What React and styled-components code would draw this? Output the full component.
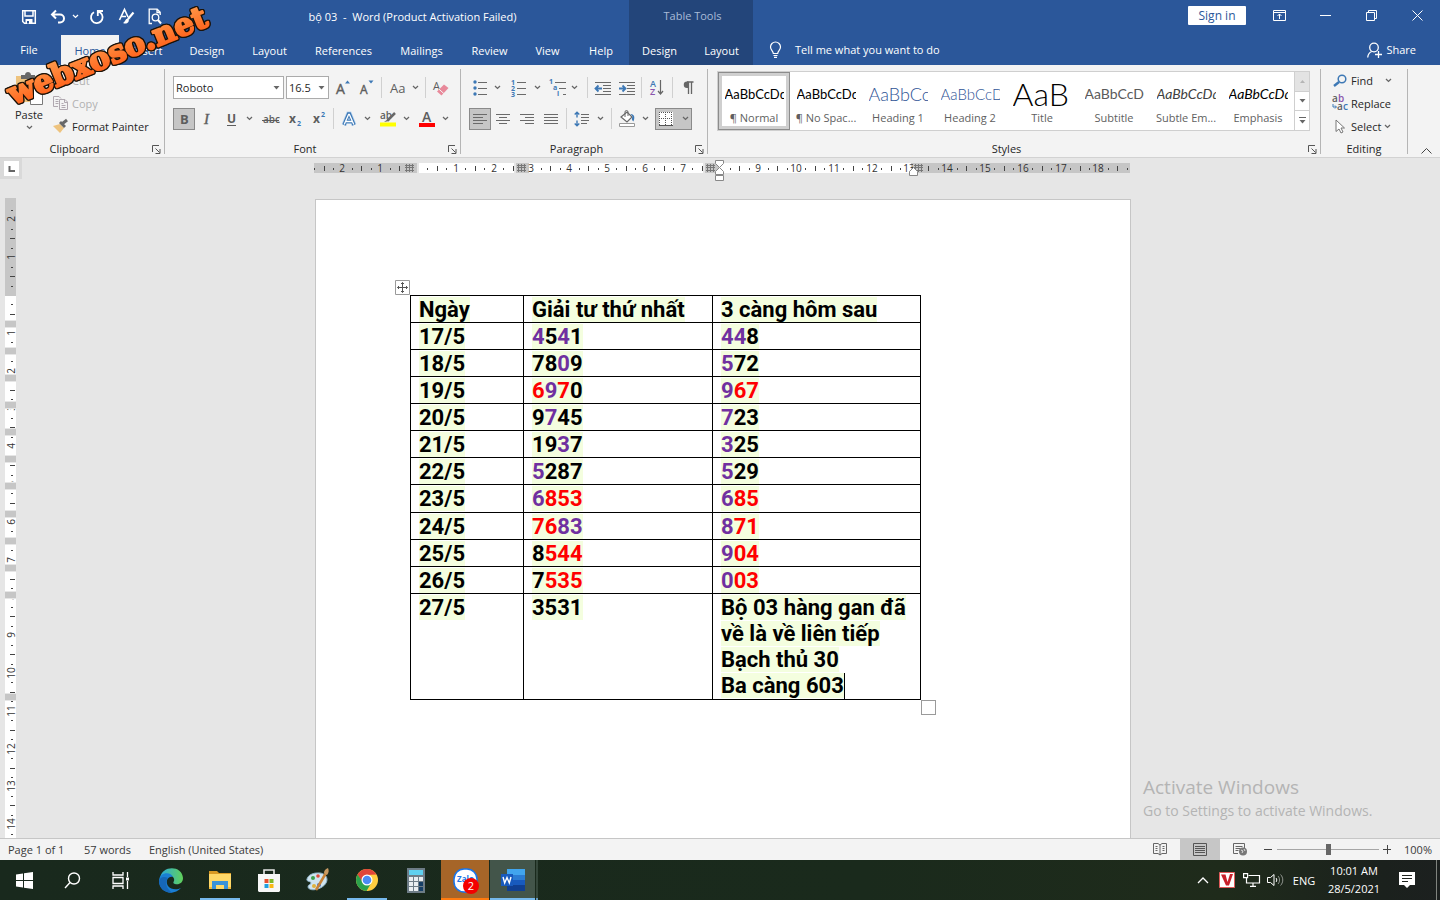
import React from 'react';
import styled, { createGlobalStyle, css } from 'styled-components';

const ui = `'Open Sans', 'Noto Sans', sans-serif`;

const GlobalStyle = createGlobalStyle`
  * { box-sizing: border-box; }
  body { margin: 0; background: #e6e6e6; font-family: ${ui}; font-size: 11px; color: #262626; }
  button, select, input { font: inherit; color: inherit; }
  button { border: 0; padding: 0; margin: 0; background: none; cursor: default; }
  svg { display: block; flex: none; overflow: visible; }
`;

/* ---------- frame ---------- */
const Shell = styled.div`
  position: relative;
  display: flex;
  flex-direction: column;
  height: 100vh;
  overflow: hidden;
`;
const SiteMark = styled.svg`
  position: absolute;
  left: 0;
  top: 0;
  pointer-events: none;
  filter: drop-shadow(1px 0 0 #1c1208) drop-shadow(-1px 0 0 #1c1208) drop-shadow(0 1px 0 #1c1208) drop-shadow(0 -1px 0 #1c1208);
`;
const TitleBar = styled.header`
  display: flex;
  height: 35px;
  background: #2b579a;
  color: #fff;
`;
const QuickAccess = styled.div`
  display: flex;
  align-items: center;
  width: 196px;
  height: 33px;
  padding-left: 20px;
`;
const QuickButton = styled.button`
  display: flex;
  justify-content: center;
  width: ${(p) => p.$w}px;
`;
const DocTitle = styled.h1`
  width: 433px;
  margin: 0;
  font-size: 11px;
  font-weight: 400;
  line-height: 33px;
  text-align: center;
  white-space: pre;
`;
const ContextTitle = styled.div`
  width: 124px;
  padding-left: 3px;
  background: #23457a;
  color: #a9bcd8;
  line-height: 32px;
  text-align: center;
`;
const WindowControls = styled.div`
  display: flex;
  align-items: center;
  height: 31px;
  margin-left: auto;
`;
const SignIn = styled.button`
  width: 58px;
  height: 19px;
  margin-right: 10px;
  background: #fff;
  border-radius: 1px;
  color: #2b579a;
  font-size: 12px;
  line-height: 20px;
`;
const WindowButton = styled.button`
  display: flex;
  justify-content: center;
  width: 46px;
`;
const TabBar = styled.nav`
  display: flex;
  height: 30px;
  background: #2b579a;
  color: #fff;
`;
const Tab = styled.button`
  width: ${(p) => p.$w}px;
  height: 30px;
  line-height: 30px;
  padding-top: ${(p) => (p.$file ? 0 : 1)}px;
  ${(p) => p.$file && css`padding-right: 3px;`}
  ${(p) => p.$active && css`background: #f3f3f3; color: #2b579a;`}
  ${(p) => p.$context && css`background: #23457a;`}
`;
const TellMe = styled.button`
  display: flex;
  align-items: center;
  gap: 13px;
  padding-left: 16px;
  height: 29px;
`;
const Share = styled.button`
  display: flex;
  align-items: center;
  gap: 4px;
  height: 29px;
  margin-left: auto;
  padding-right: 24px;
`;

/* ---------- ribbon ---------- */
const Ribbon = styled.div`
  display: flex;
  height: 93px;
  background: #f3f3f3;
  border-bottom: 1px solid #d2d2d2;
`;
const GroupBox = styled.section`
  display: flex;
  flex-direction: column;
  width: ${(p) => (p.$w ? p.$w + 'px' : 'auto')};
  flex: ${(p) => (p.$w ? 'none' : '1 1 0')};
  min-width: 0;
  margin: 4px 0 3px;
  border-right: 1px solid #b5b5b5;
`;
const GroupBody = styled.div`
  display: flex;
  flex: 1;
  min-height: 0;
  flex-direction: ${(p) => (p.$column ? 'column' : 'row')};
  gap: ${(p) => (p.$column ? 8 : 0)}px;
  padding: ${(p) => p.$pad || '0'};
`;
const GroupFoot = styled.div`
  display: flex;
  align-items: center;
  height: 10px;
`;
const GroupLabel = styled.span`
  flex: 1;
  text-align: center;
  line-height: 14px;
`;
const Launcher = styled.button`
  display: flex;
  justify-content: center;
  width: 15px;
`;
const ToolRow = styled.div`
  display: flex;
  align-items: center;
  height: 23px;
`;
const Tool = styled.button`
  display: flex;
  align-items: center;
  justify-content: center;
  gap: ${(p) => p.$gap || 0}px;
  width: ${(p) => p.$w || 24}px;
  height: 22px;
  color: #5d5d5d;
  ${(p) => p.$on && css`background: #c6c6c6; border: 1px solid #8a8a8a;`}
`;
const Rule = styled.span`
  width: 1px;
  height: 21px;
  margin: 0 3px 0 ${(p) => p.$before || 2}px;
  background: #d0d0d0;
`;
const Gap = styled.span`
  width: ${(p) => p.$w}px;
`;
const Combo = styled.span`
  display: flex;
  align-items: center;
  width: ${(p) => p.$w}px;
  height: 23px;
  margin-right: 2px;
  padding-right: 3px;
  background: #fff;
  border: 1px solid #ababab;
`;
const ComboSelect = styled.select`
  flex: 1;
  min-width: 0;
  appearance: none;
  border: 0;
  padding: 1px 0 0 2px;
  background: none;
  line-height: 20px;
`;
const PasteButton = styled.button`
  display: flex;
  flex-direction: column;
  align-items: center;
  gap: 3px;
  width: 53px;
  padding: 3px 0 0 5px;
  line-height: 14px;
`;
const CommandList = styled.div`
  display: flex;
  flex-direction: column;
  gap: 1px;
`;
const Command = styled.button`
  display: flex;
  align-items: center;
  gap: 3px;
  height: 22px;
  text-align: left;
  color: ${(p) => (p.disabled ? '#b1b1b1' : '#262626')};
`;
const CommandIcon = styled.span`
  display: flex;
  justify-content: center;
  width: 16px;
`;
const Gallery = styled.div`
  display: flex;
  flex: 1;
  min-width: 0;
  height: 60px;
  background: #fff;
  border: 1px solid #cfcfcf;
`;
const GalleryItems = styled.div`
  display: flex;
  flex: 1;
  min-width: 0;
  overflow: hidden;
`;
const StyleCard = styled.button`
  display: flex;
  flex: none;
  flex-direction: column;
  align-items: center;
  width: 72px;
  height: 58px;
  padding-top: 9px;
  color: #5f5f5f;
  line-height: 14px;
  white-space: nowrap;
  ${(p) => p.$on && css`
    outline: 1px solid #8c8c8c;
    outline-offset: -1px;
    box-shadow: inset 0 0 0 4px #cfcfcf;
  `}
`;
const Sample = styled.span`
  display: block;
  width: 59px;
  height: 26px;
  margin-bottom: 4px;
  overflow: hidden;
  color: ${(p) => p.$color};
  font-family: Lato, ${ui};
  font-size: ${(p) => p.$size}px;
  font-style: ${(p) => (p.$italic ? 'italic' : 'normal')};
  font-weight: ${(p) => p.$weight || 400};
  line-height: 26px;
  text-align: left;
`;
const GalleryScroll = styled.div`
  display: flex;
  flex-direction: column;
  width: 15px;
  border-left: 1px solid #cfcfcf;
`;
const ScrollButton = styled.button`
  display: flex;
  flex: 1;
  align-items: center;
  justify-content: center;
  background: ${(p) => (p.disabled ? '#e3e3e3' : '#fff')};
  & + & { border-top: 1px solid #cfcfcf; }
`;
const Collapse = styled.button`
  display: flex;
  align-items: flex-end;
  justify-content: center;
  width: 32px;
  padding: 0 0 3px 5px;
`;

/* ---------- document area ---------- */
const RulerBar = styled.div`
  display: flex;
  height: 24px;
`;
const TabStop = styled.button`
  display: flex;
  align-items: center;
  justify-content: center;
  width: 22px;
  height: 21px;
  background: #d9d9d9;
`;
const RulerSlot = styled.div`
  display: flex;
  flex: 1;
  justify-content: center;
  padding-right: 18px;
`;
const Workspace = styled.main`
  position: relative;
  display: flex;
  flex: 1;
  min-height: 0;
  overflow: hidden;
`;
const SideRuler = styled.div`
  width: 16px;
  padding: 16px 0 0 5px;
`;
const PageSlot = styled.div`
  display: flex;
  flex: 1;
  justify-content: center;
  align-items: flex-start;
  padding: 17px 10px 0 0;
`;
const Page = styled.article`
  width: 816px;
  height: 1056px;
  padding: 95px 94px;
  background: #fff;
  border: 1px solid #c6c6c6;
`;
const TableFrame = styled.div`
  position: relative;
  width: 511px;
`;
const MoveHandle = styled.button`
  position: absolute;
  left: -15px;
  top: -15px;
`;
const SizeHandle = styled.button`
  position: absolute;
  right: -15px;
  bottom: -15px;
  width: 15px;
  height: 15px;
  background: #fff;
  border: 1px solid #9a9a9a;
`;
const DataTable = styled.table`
  width: 511px;
  table-layout: fixed;
  border-collapse: collapse;
  color: #000;
  font-family: Roboto, sans-serif;
  font-size: 22px;
  font-weight: 700;
  line-height: 24px;
`;
const cell = css`
  padding: 2px 0 0 8px;
  border: 1px solid #000;
  text-align: left;
  vertical-align: top;
  font-weight: 700;
`;
const HeadCell = styled.th`
  ${cell}
  width: ${(p) => p.$w}px;
`;
const Cell = styled.td`
  ${cell}
  ${(p) => p.$tall && css`padding-bottom: 1px;`}
  ${(p) => p.$note && css`padding-top: 1px; line-height: 26px;`}
`;
const Marked = styled.span`
  background: #f4fedf;
`;
const Digit = styled.span`
  color: ${(p) => ({ p: '#7030a0', r: '#ff0000', k: '#000' })[p.$c]};
`;
const NoteLine = styled.div`
  white-space: nowrap;
`;
const Caret = styled.span`
  display: inline-block;
  width: 1px;
  height: 26px;
  background: #000;
  vertical-align: top;
`;
const Activation = styled.aside`
  position: absolute;
  right: 61px;
  bottom: 17px;
  width: 236px;
  color: #b4b4b4;
  font-size: 14px;
  line-height: 21px;
  white-space: nowrap;
`;
const ActivationTitle = styled.div`
  font-size: 19px;
  line-height: 25px;
`;

/* ---------- status bar ---------- */
const StatusBar = styled.footer`
  display: flex;
  align-items: center;
  height: 22px;
  padding: 0 8px;
  background: #f3f3f3;
  border-top: 1px solid #c6c6c6;
  color: #3a3a3a;
`;
const StatusText = styled.span`
  width: ${(p) => (p.$w ? p.$w + 'px' : 'auto')};
  white-space: nowrap;
`;
const ViewButtons = styled.div`
  display: flex;
  margin-left: auto;
`;
const ViewButton = styled.button`
  display: flex;
  align-items: center;
  justify-content: center;
  width: 40px;
  height: 21px;
  background: ${(p) => (p.$on ? '#c6c6c6' : 'none')};
`;
const ZoomButton = styled.button`
  display: flex;
  justify-content: center;
  width: 17px;
`;
const ZoomSlider = styled.input`
  width: 102px;
  height: 12px;
  margin: 0;
  appearance: none;
  background: linear-gradient(#a6a6a6, #a6a6a6) center / 100% 1px no-repeat;
  &::-webkit-slider-thumb {
    appearance: none;
    width: 5px;
    height: 11px;
    background: #666;
  }
`;
const ZoomValue = styled.span`
  width: 36px;
  text-align: right;
`;

/* ---------- taskbar ---------- */
const TaskBar = styled.nav`
  display: flex;
  height: 40px;
  background: linear-gradient(90deg, #19291d 0%, #1a2a1c 60%, #1f2b1b 85%, #1b211d 96%, #1c201f 100%);
  color: #fff;
`;
const TaskButton = styled.button`
  position: relative;
  display: flex;
  align-items: center;
  justify-content: center;
  width: ${(p) => p.$w || 49}px;
  margin-right: ${(p) => (p.$bg ? 1 : 0)}px;
  background: ${(p) => p.$bg || 'none'};
  box-shadow: ${(p) => (p.$line && p.$bg ? `inset 0 -2px 0 ${p.$line}` : 'none')};
  ${(p) => p.$line && !p.$bg && css`
    background: linear-gradient(${p.$line}, ${p.$line}) center bottom / 40px 2px no-repeat;
  `}
`;
const StackEdge = styled.span`
  width: 2px;
  background: #35473b;
  box-shadow: inset 0 -2px 0 #6296bd;
`;
const Badge = styled.span`
  position: absolute;
  right: 10px;
  bottom: 6px;
  width: 16px;
  height: 16px;
  border-radius: 8px;
  background: #f40000;
  font-size: 11px;
  line-height: 16px;
  text-align: center;
`;
const Tray = styled.div`
  display: flex;
  align-items: center;
  margin-left: auto;
  padding-right: 3px;
`;
const TrayButton = styled.button`
  display: flex;
  align-items: center;
  justify-content: center;
  width: ${(p) => p.$w}px;
  height: 40px;
`;
const Clock = styled.time`
  width: 66px;
  line-height: 18px;
  text-align: center;
`;
const DesktopEdge = styled.button`
  width: 1px;
  height: 40px;
  background: #80847f;
`;

/* ---------- drawings ---------- */
const Icon = ({ w = 16, h = 16, children, ...rest }) => (
  <svg width={w} height={h} viewBox={`0 0 ${w} ${h}`} fill="none" stroke="currentColor" aria-hidden="true" {...rest}>
    {children}
  </svg>
);
const Chev = ({ c = '#666' }) => (
  <Icon w={7} h={5} stroke={c} strokeWidth="1.3"><path d="M1 1l2.5 2.4L6 1" /></Icon>
);
const Arrow = ({ c = '#666', up }) => (
  <Icon w={7} h={4} stroke="none" fill={c}><path d={up ? 'M1 4h5L3.500 1z' : 'M0.500 0h6L3.500 3.500z'} /></Icon>
);
const LaunchIcon = () => (
  <Icon w={9} h={9} stroke="#555"><path d="M.5 7V.5H7M3.500 3.500l4 4M8 4v4.500H3.500" /></Icon>
);
const Lines = ({ rows, w = 16, c = '#6a6a6a' }) => (
  <Icon w={w} h={14} stroke={c} strokeWidth="1">
    {rows.map(([a, b], i) => <path key={i} d={`M${a} ${i * 3 + 2.5}H${b}`} />)}
  </Icon>
);
const Glyph = ({ x, y, size, children, ...r }) => (
  <text x={x} y={y} fontSize={size} stroke="none" fill="#5d5d5d" fontFamily="Open Sans, sans-serif" {...r}>{children}</text>
);

const SaveIcon = () => (
  <Icon w={16} h={16} strokeWidth="1.500"><path d="M1.700 1.700h12.600v12.600H3.500L1.700 12.500zM4 2v5h8V2" /><path d="M4.500 10h7v4.500h-7z" fill="#fff" stroke="none" /><path d="M6 12h2v2.500H6z" fill="#2b579a" stroke="none" /></Icon>
);
const UndoIcon = () => (
  <Icon w={16} h={16} strokeWidth="2"><path d="M6 1.500L2 5.500l4 4M2.500 5.500H10a4 4 0 010 8H8" /></Icon>
);
const RedoIcon = () => (
  <Icon w={16} h={16} strokeWidth="1.800"><path d="M5 3.200a5.800 5.800 0 106.500.6L9 2.500M14 2H8.800v5" /></Icon>
);
const StyleBrushIcon = () => (
  <Icon w={17} h={17}><path d="M1.500 12L6.500 1.500 10 9M3.500 8.500H8" strokeWidth="1.600" /><path d="M15.500 4.500L10 11" strokeWidth="2.200" /><path d="M10.500 10.500c-3-.5-3 3-5.500 4.500 3 1.500 7 0 5.500-4.500z" fill="#fff" stroke="none" /></Icon>
);
const PreviewIcon = () => (
  <Icon w={14} h={17} strokeWidth="1.300"><path d="M4 15.500H1.200V1.200h8l3 3V7M9 1.500v3h3" /><circle cx="7.500" cy="9.500" r="3.300" /><path d="M10 12l3 3.500" strokeWidth="2" /></Icon>
);
const RibbonOptIcon = () => (
  <Icon w={13} h={11}><path d="M.5.5h12v10H.5zM.5 2.500h12M6.500 9V4M4.500 6l2-2 2 2" /></Icon>
);
const BulbIcon = () => (
  <Icon w={13} h={17} strokeWidth="1.200"><path d="M4.300 12.500c0-2.500-2.800-3.500-2.800-6.500a5 5 0 0110 0c0 3-2.800 4-2.800 6.500zM4.500 14.500h4M5 16.300h3" /></Icon>
);
const ShareIcon = () => (
  <Icon w={15} h={16} strokeWidth="1.300"><circle cx="7" cy="5.500" r="4.300" /><path d="M.7 15.500c.3-3 1.600-5 4-6M11.500 9v7M8 12.500h7" /></Icon>
);
const PasteIcon = () => (
  <Icon w={30} h={33} stroke="none">
    <path d="M2 4h24v26H2z" fill="#eec37e" /><path d="M7 7V3h4c0-4 6-4 6 0h4v4z" fill="#686868" />
    <path d="M16.500 15.500h8l4 4v13h-12z" fill="#fff" stroke="#797979" /><path d="M24.500 15.500v4h4" stroke="#797979" />
  </Icon>
);
const CutIcon = () => (
  <Icon w={16} stroke="#b5b5b5"><path d="M5 1l5 9M11 1L6 10" /><circle cx="4.500" cy="12" r="2" /><circle cx="11.500" cy="12" r="2" /></Icon>
);
const CopyIcon = () => (
  <Icon w={16} h={14} stroke="#b0a8b0"><path d="M5 10.500H.5V.5H6l2 2M2.500 3.500h3M2.500 5.500h3M2.500 7.500h3" /><path d="M6.500 3.500H12l2.500 2.500v7.500h-8zM11.500 3.500v3h3M8.500 7.500h2M8.500 9.500h4M8.500 11.500h4" fill="#f3f3f3" /></Icon>
);
const PainterIcon = () => (
  <Icon w={16} h={14} stroke="none"><path d="M0 7l7-2 4 4-4 5z" fill="#eec37e" /><path d="M6 4l2-2 5 5-2 2z" fill="#686868" /><path d="M9.500 4.500L14 1" stroke="#686868" strokeWidth="3" /></Icon>
);
const GrowFont = ({ small }) => (
  <Icon w={16} h={17}><Glyph x={1} y={15} size={small ? 12 : 14} stroke="#5d5d5d" strokeWidth=".4">A</Glyph><path d={small ? 'M9.500 1.500h5L12 4.500z' : 'M10 4.500h5L12.500 1.500z'} fill="#3d78b5" stroke="none" /></Icon>
);
const EraserIcon = () => (
  <Icon w={16} h={16}><Glyph x={0} y={10} size={11}>A</Glyph><path d="M4 11.500l7-7 4.500 3.500-7 7.500z" fill="#e8899a" stroke="none" /><path d="M5.800 9l5 4.500" stroke="#f3f3f3" /></Icon>
);
const AbcStrike = () => (
  <Icon w={18} h={14}><Glyph x={1} y={11} size={10} fontWeight="600">abc</Glyph><path d="M0 8.500h17" stroke="#5d5d5d" /></Icon>
);
const Script = ({ sup }) => (
  <Icon w={16} h={16}><Glyph x={2} y={12} size={12} fontWeight="700">x</Glyph><Glyph x={10} y={sup ? 6 : 15} size={7} fontWeight="700" fill="#3d78b5">2</Glyph></Icon>
);
const EffectA = () => (
  <Icon w={16} h={16}><path d="M3 14L7.500 3h1L13 14M4.500 10.500h7" stroke="#bcd6ef" strokeWidth="5" /><path d="M3 14L7.500 3h1L13 14M4.500 10.500h7" stroke="#3d78b5" strokeWidth="3.400" /><path d="M3.200 13.500L7.600 3.500h.8L12.800 13.500M4.800 10.500h6.500" stroke="#fff" strokeWidth="1.300" /></Icon>
);
const HighlightIcon = () => (
  <Icon w={17} h={17}><Glyph x={0} y={9} size={10} fontWeight="600">ab</Glyph><path d="M15 3L7.500 10.500" stroke="#686868" strokeWidth="2.500" /><path d="M4 12l4-3 1.500 2z" fill="#686868" stroke="none" /><path d="M0 12.500h16v4H0z" fill="#ffff00" stroke="none" /></Icon>
);
const FontColorIcon = () => (
  <Icon w={16} h={17}><Glyph x={3} y={12} size={14} fontWeight="600">A</Glyph><path d="M0 13h16v4H0z" fill="#ff0000" stroke="none" /></Icon>
);
const BulletsIcon = () => (
  <Icon w={14} h={16} stroke="#6a6a6a">{[2, 8, 14].map((y) => <g key={y}><circle cx="2" cy={y} r="1.700" fill="#3d78b5" stroke="none" /><path d={`M5 ${y + 0.5}h9`} /></g>)}</Icon>
);
const NumbersIcon = () => (
  <Icon w={16} h={18} stroke="#6a6a6a">{[1, 2, 3].map((n) => <g key={n}><Glyph x={0} y={n * 6 - 0.5} size={7} fontWeight="700" fill="#3d78b5">{n}</Glyph><path d={`M6 ${n * 6 - 2.5}h9`} /></g>)}</Icon>
);
const MultiIcon = () => (
  <Icon w={17} h={18} stroke="#6a6a6a">{['1', 'a', 'i'].map((n, i) => <g key={n}><Glyph x={i * 4} y={i * 6 + 5} size={7} fontWeight="700" fill="#3d78b5">{n}</Glyph><path d={`M${i * 4 + 6} ${i * 6 + 3.5}H17`} /></g>)}</Icon>
);
const IndentIcon = ({ right }) => (
  <Icon w={16} h={14} stroke="#6a6a6a"><path d="M0 1.500h16M8 4.500h8M8 7.500h8M8 10.500h8M0 13.500h16" /><path d={right ? 'M0 7.500h6M3.500 4.500l3 3-3 3' : 'M1 7.500h6M3.500 4.500l-3 3 3 3'} stroke="#3d78b5" strokeWidth="1.800" /></Icon>
);
const SortIcon = () => (
  <Icon w={16} h={17}><Glyph x={1} y={8} size={9} fontWeight="600" fill="#3d78b5">A</Glyph><Glyph x={1} y={16} size={9} fontWeight="600" fill="#8a55ad">Z</Glyph><path d="M11.500 1v14M9 12l2.500 3 2.500-3" stroke="#666" strokeWidth="1.200" /></Icon>
);
const PilcrowIcon = () => (
  <Icon w={11} h={14} stroke="#666" strokeWidth="1.300"><path d="M5.500 1v12M8.500 1v12M10.500 1H4" /><path d="M5.500.5H4a3 3 0 000 6.500h1.500z" fill="#666" stroke="none" /></Icon>
);
const SpacingIcon = () => (
  <Icon w={16} h={16} stroke="#6a6a6a"><path d="M7 3.500h8M7 6.500h8M7 9.500h8M7 12.500h6" /><path d="M3 1.500v5M3 9.500v5M.7 3.500L3 1.200l2.300 2.300M.7 12.500L3 14.800l2.300-2.300" stroke="#3d78b5" strokeWidth="1.400" /></Icon>
);
const BucketIcon = () => (
  <Icon w={16} h={17} stroke="#686868"><path d="M2 7l6-5 5 5-5 5z" fill="#fff" strokeWidth="1.200" /><path d="M6 7V2a1.500 1.500 0 013 0v4" /><path d="M11.500 4c5 .5 4 4.500 3 7.500-1.800-1-2-3-1-5z" fill="#3d78b5" stroke="none" /><path d="M.5 13.500h15v3H.5z" fill="#fff" stroke="#999" /></Icon>
);
const BordersIcon = () => (
  <Icon w={14} h={14} stroke="#555"><path d="M0 0h14v13H0z" fill="#fff" stroke="none" /><path d="M0 .5h13M0 6.500h13M.5 0v13M6.500 0v13M12.500 0v13" strokeDasharray="1 1" /><path d="M0 13.500h14" /></Icon>
);
const FindIcon = () => (
  <Icon w={14} h={13} stroke="#3d78b5"><circle cx="9" cy="5" r="3.800" strokeWidth="1.500" /><path d="M6 8l-5 4" strokeWidth="2.500" /></Icon>
);
const ReplaceIcon = () => (
  <Icon w={16} h={16}><Glyph x={0} y={7} size={10} fontWeight="600">a</Glyph><Glyph x={6} y={7} size={10} fontWeight="600" fill="#8a55ad">b</Glyph><Glyph x={5} y={15} size={10} fontWeight="600">a</Glyph><Glyph x={11} y={15} size={10} fontWeight="600" fill="#3d78b5">c</Glyph><path d="M1 9v3h3M3 10.500L4.500 12 3 13.500" stroke="#3d78b5" /></Icon>
);
const SelectIcon = () => (
  <Icon w={10} h={15} stroke="#777"><path d="M1 1v11.500l3-2.500 2 4 2-1-2-4h3.500z" fill="#fff" /></Icon>
);

/* ---------- rulers ---------- */
const CM = 37.8;
const range = (a, b) => Array.from({ length: b - a + 1 }, (_, i) => a + i);

const TopRuler = () => {
  const zero = 104;
  return (
    <svg width="816" height="24" viewBox="0 0 816 24" fontFamily="Open Sans, sans-serif" fontSize="10" aria-hidden="true">
      <path d="M0 5h816v10H0z" fill="#c6c6c6" />
      <path d="M105 5h95v10h-95zM215 5h174v10H215zM406 5h191v10H406z" fill="#fff" />
      <path d="M103 5h2v10h-2zM200 5h2v10h-2zM389 5h2v10h-2z" fill="#e6e6e6" />
      {range(-11, 75).map((q) => {
        const x = Math.round(zero + (q * CM) / 4);
        if (x > 815 || q === 0) return null;
        if (q % 4 === 0) {
          const n = Math.abs(q / 4);
          return n === 8 ? null : <text key={q} x={x} y="14" textAnchor="middle" fill="#333">{n}</text>;
        }
        return q % 2 === 0
          ? <path key={q} d={`M${x} 8v5h1v-5z`} fill="#444" />
          : <path key={q} d={`M${x} 10h1v2h-1z`} fill="#444" />;
      })}
      {[91, 203, 392, 600].map((x) => (
        <g key={x}>
          <path d={`M${x - 1} 5h11v10h-11z`} fill="#c6c6c6" />
          <path d={`M${x + 1.5} 6v8M${x + 4.5} 6v8M${x + 7.5} 6v8M${x} 7.500h9M${x} 9.500h9M${x} 12.500h9`} stroke="#777" />
        </g>
      ))}
      <g fill="#fff" stroke="#888">
        <path d="M401.500 2.500h8v3l-4 4-4-4z" />
        <path d="M401.500 16.500v-3l4-4 4 4v3zM401.500 17.500h8v5h-8z" />
        <path d="M595.500 17.500v-4l4-4 4 4v4z" />
      </g>
    </svg>
  );
};

const rowMarks = [123, 150, 177, 204, 231, 258, 285, 313, 340, 367, 394, 496];
const LeftRuler = () => {
  const zero = 97;
  return (
    <svg width="11" height="680" viewBox="0 0 11 680" fontFamily="Open Sans, sans-serif" fontSize="10" aria-hidden="true">
      <path d="M0 0h11v680H0z" fill="#fff" />
      <path d="M0 0h11v98H0z" fill="#c6c6c6" />
      {range(-9, 60).map((q) => {
        const y = Math.round(zero + (q * CM) / 4);
        if (q === 0) return null;
        if (q % 4 === 0) {
          const n = Math.abs(q / 4);
          return <text key={q} transform={`translate(10 ${y}) rotate(-90)`} textAnchor="middle" fill="#333">{n}</text>;
        }
        return q % 2 === 0
          ? <path key={q} d={`M5 ${y}h5v1H5z`} fill="#444" />
          : <path key={q} d={`M6 ${y}h2v1H6z`} fill="#444" />;
      })}
      {rowMarks.map((y) => (
        <g key={y}><path d={`M0 ${y - 1}h11v8H0z`} fill="#e6e6e6" /><path d={`M0 ${y}h11v6H0z`} fill="#c6c6c6" /></g>
      ))}
    </svg>
  );
};

/* ---------- data ---------- */
const tabs = [
  ['File', 61], ['Home', 58], ['Insert', 57], ['Design', 62], ['Layout', 63], ['References', 85],
  ['Mailings', 71], ['Review', 65], ['View', 51], ['Help', 56], ['Design', 61], ['Layout', 63],
];
const styleCards = [
  { name: '¶ Normal', size: 13, color: '#000' },
  { name: '¶ No Spac...', size: 13, color: '#000' },
  { name: 'Heading 1', size: 18, color: '#2f5496', text: 'AaBbCc', weight: 300 },
  { name: 'Heading 2', size: 15, color: '#2f5496', text: 'AaBbCcD', weight: 300 },
  { name: 'Title', size: 32, color: '#000', text: 'AaB', weight: 300 },
  { name: 'Subtitle', size: 14, color: '#5a5a5a', text: 'AaBbCcD' },
  { name: 'Subtle Em...', size: 14, color: '#404040', italic: true },
  { name: 'Emphasis', size: 14, color: '#000', italic: true },
];
const results = [
  ['17/5', '4541', 'pkpk', '448', 'ppk'],
  ['18/5', '7809', 'kkpk', '572', 'pkk'],
  ['19/5', '6970', 'rprk', '967', 'prr'],
  ['20/5', '9745', 'kpkk', '723', 'pkk'],
  ['21/5', '1937', 'kkpk', '325', 'pkk'],
  ['22/5', '5287', 'pkkk', '529', 'pkk'],
  ['23/5', '6853', 'prrr', '685', 'prr'],
  ['24/5', '7683', 'rrpp', '871', 'prr'],
  ['25/5', '8544', 'krrr', '904', 'prr'],
  ['26/5', '7535', 'krrr', '003', 'prr'],
];
const notes = ['Bộ 03 hàng gan đã', 'về là về liên tiếp', 'Bạch thủ 30', 'Ba càng 603'];

const Digits = ({ value, colors }) => (
  <Marked>{[...value].map((d, i) => <Digit key={i} $c={colors[i]}>{d}</Digit>)}</Marked>
);
const Group = ({ label, w, launcher = true, column, pad, children }) => (
  <GroupBox $w={w} aria-label={label}>
    <GroupBody $column={column} $pad={pad}>{children}</GroupBody>
    <GroupFoot>
      <GroupLabel>{label}</GroupLabel>
      {launcher && <Launcher aria-label={`${label} settings`}><LaunchIcon /></Launcher>}
    </GroupFoot>
  </GroupBox>
);
const Drop = ({ label, w = 12 }) => <Tool $w={w} aria-label={label}><Chev /></Tool>;

const FontGroup = () => (
  <Group label="Font" w={296} column pad="7px 0 0 8px">
    <ToolRow>
      <Combo $w={111}><ComboSelect aria-label="Font" defaultValue="Roboto"><option>Roboto</option></ComboSelect><Arrow /></Combo>
      <Combo $w={43}><ComboSelect aria-label="Font size" defaultValue="16.5"><option>16.5</option></ComboSelect><Arrow /></Combo>
      <Tool aria-label="Increase font size"><GrowFont /></Tool>
      <Tool aria-label="Decrease font size"><GrowFont small /></Tool>
      <Rule />
      <Tool $w={38} $gap={5} aria-label="Change case">
        <Icon w={17} h={14}><Glyph x={0} y={12} size={13}>Aa</Glyph></Icon><Chev />
      </Tool>
      <Rule />
      <Tool aria-label="Clear formatting"><EraserIcon /></Tool>
    </ToolRow>
    <ToolRow>
      <Tool $w={22} $on aria-label="Bold"><Icon w={12} h={14}><Glyph x={2} y={12} size={13} fontWeight="700">B</Glyph></Icon></Tool>
      <Tool aria-label="Italic"><Icon w={10} h={14}><text x="2" y="12" fontSize="15" fontStyle="italic" fontFamily="Liberation Serif, serif" stroke="#5d5d5d" strokeWidth=".4" fill="#5d5d5d">I</text></Icon></Tool>
      <Tool aria-label="Underline"><Icon w={10} h={14}><Glyph x={1} y={11} size={12} fontWeight="700">U</Glyph><path d="M1 13.500h9" stroke="#5d5d5d" /></Icon></Tool>
      <Drop label="Underline style" /><Gap $w={4} />
      <Tool aria-label="Strikethrough"><AbcStrike /></Tool>
      <Tool aria-label="Subscript"><Script /></Tool>
      <Tool aria-label="Superscript"><Script sup /></Tool>
      <Rule />
      <Tool aria-label="Text effects"><EffectA /></Tool>
      <Drop label="Text effect list" /><Gap $w={3} />
      <Tool aria-label="Highlight"><HighlightIcon /></Tool>
      <Drop label="Highlight colour" /><Gap $w={3} />
      <Tool aria-label="Font colour"><FontColorIcon /></Tool>
      <Drop label="Font colour list" />
    </ToolRow>
  </Group>
);

const ParagraphGroup = () => (
  <Group label="Paragraph" w={247} column pad="7px 0 0 8px">
    <ToolRow>
      <Tool $w={22} aria-label="Bullets"><BulletsIcon /></Tool>
      <Drop label="Bullet list" /><Gap $w={4} />
      <Tool aria-label="Numbering"><NumbersIcon /></Tool>
      <Drop label="Number list" /><Gap $w={3} />
      <Tool $w={22} aria-label="Multilevel list"><MultiIcon /></Tool>
      <Drop label="Multilevel styles" />
      <Rule $before={7} />
      <Tool aria-label="Decrease indent"><IndentIcon /></Tool>
      <Tool aria-label="Increase indent"><IndentIcon right /></Tool>
      <Rule />
      <Tool aria-label="Sort"><SortIcon /></Tool>
      <Rule $before={3} />
      <Tool aria-label="Show marks"><PilcrowIcon /></Tool>
    </ToolRow>
    <ToolRow>
      <Tool $w={22} $on aria-label="Align left"><Lines rows={[[1, 15], [1, 11], [1, 15], [1, 11]]} /></Tool>
      <Tool aria-label="Center"><Lines rows={[[1, 15], [4, 12], [1, 15], [4, 12]]} /></Tool>
      <Tool aria-label="Align right"><Lines rows={[[1, 15], [6, 15], [1, 15], [6, 15]]} /></Tool>
      <Tool aria-label="Justify"><Lines rows={[[1, 15], [1, 15], [1, 15], [1, 15]]} /></Tool>
      <Rule $before={3} />
      <Tool aria-label="Line spacing"><SpacingIcon /></Tool>
      <Drop label="Line spacing list" />
      <Rule $before={5} />
      <Tool aria-label="Shading"><BucketIcon /></Tool>
      <Drop label="Shading colour" /><Gap $w={4} />
      <Tool $w={37} $gap={9} $on aria-label="Borders"><BordersIcon /><Chev /></Tool>
    </ToolRow>
  </Group>
);

const StylesGroup = () => (
  <Group label="Styles" pad="2px 10px 0 9px">
    <Gallery>
      <GalleryItems>
        {styleCards.map((s, i) => (
          <StyleCard key={s.name} $on={i === 0}>
            <Sample $size={s.size} $color={s.color} $weight={s.weight} $italic={s.italic}>{s.text || 'AaBbCcDd'}</Sample>
            {s.name}
          </StyleCard>
        ))}
      </GalleryItems>
      <GalleryScroll>
        <ScrollButton disabled aria-label="Previous styles"><Arrow up c="#b5b5b5" /></ScrollButton>
        <ScrollButton aria-label="Next styles"><Arrow /></ScrollButton>
        <ScrollButton aria-label="All styles"><Icon w={7} h={7} stroke="#666"><path d="M0 .5h7" /><path d="M.5 3h6L3.500 6.500z" fill="#666" stroke="none" /></Icon></ScrollButton>
      </GalleryScroll>
    </Gallery>
  </Group>
);

const DocumentTable = () => (
  <TableFrame>
    <MoveHandle aria-label="Move table">
      <Icon w={15} h={15} stroke="#555"><path d="M.5.5h14v14H.5z" fill="#fff" stroke="#9a9a9a" /><path d="M7.500 2.500v10M2.500 7.500h10M6 4l1.500-1.500L9 4M6 11l1.500 1.500L9 11M4 6L2.500 7.500 4 9M11 6l1.500 1.500L11 9" /></Icon>
    </MoveHandle>
    <DataTable>
      <thead>
        <tr>
          <HeadCell $w={113}><Marked>Ngày</Marked></HeadCell>
          <HeadCell $w={189}><Marked>Giải tư thứ nhất</Marked></HeadCell>
          <HeadCell $w={208}><Marked>3 càng hôm sau</Marked></HeadCell>
        </tr>
      </thead>
      <tbody>
        {results.map(([day, prize, pc, next, nc], i) => (
          <tr key={day}>
            <Cell $tall={i === 6}><Marked>{day}</Marked></Cell>
            <Cell><Digits value={prize} colors={pc} /></Cell>
            <Cell><Digits value={next} colors={nc} /></Cell>
          </tr>
        ))}
        <tr>
          <Cell $note><Marked>27/5</Marked></Cell>
          <Cell $note><Marked>3531</Marked></Cell>
          <Cell $note>
            {notes.map((n, i) => <NoteLine key={n}><Marked>{n}</Marked>{i === 3 && <Caret />}</NoteLine>)}
          </Cell>
        </tr>
      </tbody>
    </DataTable>
    <SizeHandle aria-label="Resize table" />
  </TableFrame>
);

const Taskbar = () => (
  <TaskBar>
    <TaskButton $w={48} aria-label="Start"><Icon w={17} h={17} stroke="none" fill="#fff"><path d="M0 2.500L7 1.500V8H0zM8 1.300L17 0v8H8zM0 9h7v6.500L0 14.500zM8 9h9v8l-9-1.300z" /></Icon></TaskButton>
    <TaskButton $w={48} aria-label="Search"><Icon w={17} h={17} strokeWidth="1.400"><circle cx="10" cy="6.500" r="5.500" /><path d="M6 10.500L1 16" /></Icon></TaskButton>
    <TaskButton $w={50} aria-label="Task view"><Icon w={18} h={17} strokeWidth="1.300"><path d="M1 0v3h10V0M1 17v-3h10v3M1 5.500h10v6H1zM15.500 0v5M15.500 9v8" /><path d="M14 5.500h3v3h-3z" fill="#fff" stroke="none" /></Icon></TaskButton>
    <TaskButton aria-label="Edge">
      <Icon w={24} h={25} stroke="none">
        <defs><linearGradient id="edgeTop" x1="0" x2="1"><stop stopColor="#2aa9dd" /><stop offset="1" stopColor="#61d15a" /></linearGradient></defs>
        <path d="M1 10C3-3 23-3 24 10c0 5-4 7-8 6-2-.5-2-1.500-1-3 1-3-2-6-6-6-4 0-7 1-8 3z" fill="url(#edgeTop)" />
        <path d="M0 13c0-9 12-10 14-4-5-1-8 4-5 9 3 4 9 4 13 2C14 29 0 24 0 13z" fill="#1a7fd4" />
        <path d="M9 10c-4 5-1 12 5 15C5 25 0 20 0 13c1-4 5-5 9-3z" fill="#1667b8" />
      </Icon>
    </TaskButton>
    <TaskButton $line="#76b9ed" aria-label="File Explorer">
      <Icon w={22} h={20} stroke="none"><path d="M0 1h8l2 2h12v16H0z" fill="#d99a24" /><path d="M0 4h22v15H0z" fill="#ffd868" /><path d="M3 11h16v8h-4v-4H7v4H3z" fill="#3a92d8" /><path d="M0 17h3v2H0zM19 17h3v2h-3z" fill="#f2b93b" /></Icon>
    </TaskButton>
    <TaskButton aria-label="Store">
      <Icon w={24} h={25} stroke="none"><path d="M7 7V2h10v5" stroke="#e8e8e8" strokeWidth="1.600" /><path d="M1 6h22v17l-1 1H2l-1-1z" fill="#f7f7f7" /><path d="M7.500 11h4v4h-4z" fill="#e8502e" /><path d="M12.500 11h4v4h-4z" fill="#7db928" /><path d="M7.500 16h4v4h-4z" fill="#20a0e0" /><path d="M12.500 16h4v4h-4z" fill="#f9b813" /></Icon>
    </TaskButton>
    <TaskButton aria-label="Paint">
      <Icon w={24} h={24} stroke="none"><path d="M11 5c8-1 12 5 9 10-4 7-17 9-18 4 0-3 3-2 3-4S0 14 1 11c1-4 6-6 10-6z" fill="#cfe4ef" stroke="#8fb3c8" /><circle cx="7" cy="10" r="2" fill="#3f9e4d" /><circle cx="12" cy="8" r="1.800" fill="#e14b3b" /><circle cx="8" cy="18" r="2" fill="#e0b13d" /><circle cx="13" cy="17" r="2" fill="#3d6fd0" /><path d="M20 5L10 22" stroke="#c88236" strokeWidth="2.500" /><path d="M18 5c0-3 2-4 4-5 1 2 1 5-1 7z" fill="#c79a62" /></Icon>
    </TaskButton>
    <TaskButton $line="#76b9ed" aria-label="Chrome">
      <Icon w={24} h={24} stroke="none"><circle cx="12" cy="12" r="11" fill="#ffcd40" /><path d="M2.500 6.500A11 11 0 0121.500 6.500L12 7l-5 8z" fill="#e0453a" /><path d="M2.500 6.500a11 11 0 009 16.500l5-8.500H8z" fill="#2ba14b" /><circle cx="12" cy="12" r="5.500" fill="#fff" /><circle cx="12" cy="12" r="4.300" fill="#4b8bf4" /></Icon>
    </TaskButton>
    <TaskButton $w={50} aria-label="Calculator">
      <Icon w={18} h={25} stroke="none"><path d="M0 0h18v25H0z" fill="#6d7c86" /><path d="M2 2h14v5H2z" fill="#5fd0ee" />{[9, 14, 19].map((y) => [2, 7, 12].map((x) => <path key={`${x}-${y}`} d={`M${x} ${y}h4v4h-4z`} fill={x === 12 && y > 9 ? '#173f66' : '#e8edf0'} />))}</Icon>
    </TaskButton>
    <TaskButton $w={48} $bg="#a66528" $line="#ff7a0e" aria-label="Zalo">
      <Icon w={25} h={25} stroke="none"><rect x="1" y="1" width="23" height="23" rx="10" fill="#fff" stroke="#1775ee" strokeWidth="1.500" /><text x="4" y="14" fontSize="8" fontWeight="700" fontFamily="Open Sans, sans-serif" fill="#1a76e8">Zalo</text></Icon>
      <Badge>2</Badge>
    </TaskButton>
    <TaskButton $w={45} $bg="#43554a" $line="#76b9ed" aria-label="Word">
      <Icon w={24} h={22} stroke="none"><path d="M6 0h18v6H6z" fill="#41a5ee" /><path d="M6 6h18v5H6z" fill="#2b7cd3" /><path d="M6 11h18v5H6z" fill="#185abd" /><path d="M6 16h18v6H6z" fill="#103f91" /><path d="M0 5h12v12H0z" fill="#185abd" /><path d="M2 8l1.700 6L6 8.500 8.300 14 10 8" stroke="#fff" strokeWidth="1.400" /></Icon>
    </TaskButton>
    <StackEdge />
    <Tray>
      <TrayButton $w={24} aria-label="Hidden icons"><Icon w={12} h={7} strokeWidth="1.300"><path d="M1 6l5-5 5 5" /></Icon></TrayButton>
      <TrayButton $w={24} aria-label="Input method"><Icon w={16} h={16} stroke="none"><path d="M.5.5h15v15H.5z" fill="#fff" stroke="#e05a5a" /><path d="M2 2.500h4.500L8.500 10l2.500-8H14L10 13.500H7z" fill="#c8202a" /></Icon></TrayButton>
      <TrayButton $w={24} aria-label="Network"><Icon w={17} h={14} strokeWidth="1.200"><path d="M5.500 2.500h11v7.500H3.500V5M10 10v3M7 13.400h6" /><path d="M.6.6h4v4h-4z" /></Icon></TrayButton>
      <TrayButton $w={24} aria-label="Volume"><Icon w={16} h={14}><path d="M.5 4.500h3l3.500-3v11L3.500 9.500h-3zM9 5c1 1 1 3 0 4" /><path d="M11 3c2 2 2 6 0 8M13.500 1.500c3 3 3 8 0 11" opacity=".5" /></Icon></TrayButton>
      <TrayButton $w={34} aria-label="Language">ENG</TrayButton>
      <Clock>10:01 AM<br />28/5/2021</Clock>
      <TrayButton $w={40} aria-label="Notifications"><Icon w={16} h={16} stroke="none"><path d="M0 0h16v13h-5l-3 3-3-3H0z" fill="#fff" /><path d="M3 3.500h10M3 6.500h10M3 9.500h6" stroke="#1f241f" /></Icon></TrayButton>
      <Gap $w={9} />
      <DesktopEdge aria-label="Show desktop" />
    </Tray>
  </TaskBar>
);

export default function App() {
  return (
    <Shell>
      <GlobalStyle />
      <TitleBar>
        <QuickAccess>
          <QuickButton $w={18} aria-label="Save"><SaveIcon /></QuickButton>
          <Gap $w={11} />
          <QuickButton $w={18} aria-label="Undo"><UndoIcon /></QuickButton>
          <QuickButton $w={16} aria-label="Undo list"><Chev c="#fff" /></QuickButton>
          <QuickButton $w={28} aria-label="Redo"><RedoIcon /></QuickButton>
          <QuickButton $w={30} aria-label="Styles"><StyleBrushIcon /></QuickButton>
          <QuickButton $w={28} aria-label="Print preview"><PreviewIcon /></QuickButton>
        </QuickAccess>
        <DocTitle>{'bộ 03  -  Word (Product Activation Failed)'}</DocTitle>
        <ContextTitle>Table Tools</ContextTitle>
        <WindowControls>
          <SignIn>Sign in</SignIn>
          <WindowButton aria-label="Ribbon display"><RibbonOptIcon /></WindowButton>
          <WindowButton aria-label="Minimize"><Icon w={11} h={11}><path d="M0 5.500h11" /></Icon></WindowButton>
          <WindowButton aria-label="Restore"><Icon w={11} h={11}><path d="M.5 2.500h8v8h-8zM2.500 2.500v-2h8v8h-2" /></Icon></WindowButton>
          <WindowButton aria-label="Close"><Icon w={11} h={11}><path d="M.5.5l10 10M10.500.5l-10 10" /></Icon></WindowButton>
        </WindowControls>
      </TitleBar>
      <TabBar>
        {tabs.map(([t, w], i) => <Tab key={i} $w={w} $file={i === 0} $active={i === 1} $context={i > 9}>{t}</Tab>)}
        <TellMe><BulbIcon />Tell me what you want to do</TellMe>
        <Share><ShareIcon />Share</Share>
      </TabBar>
      <Ribbon>
        <Group label="Clipboard" w={165}>
          <PasteButton><PasteIcon />Paste<Chev /></PasteButton>
          <CommandList>
            <Command disabled><CutIcon />Cut</Command>
            <Command disabled><CopyIcon />Copy</Command>
            <Command><PainterIcon />Format Painter</Command>
          </CommandList>
        </Group>
        <FontGroup />
        <ParagraphGroup />
        <StylesGroup />
        <Group label="Editing" w={87} launcher={false} pad="0 0 0 11px">
          <CommandList>
            <Command><CommandIcon><FindIcon /></CommandIcon>Find<Gap $w={6} /><Chev /></Command>
            <Command><CommandIcon><ReplaceIcon /></CommandIcon>Replace</Command>
            <Command><CommandIcon><SelectIcon /></CommandIcon>Select<Chev /></Command>
          </CommandList>
        </Group>
        <Collapse aria-label="Collapse ribbon"><Icon w={11} h={6} stroke="#444"><path d="M.5 5.500l5-5 5 5" /></Icon></Collapse>
      </Ribbon>
      <RulerBar>
        <TabStop aria-label="Tab stop"><Icon w={15} h={15} stroke="none"><path d="M0 0h15v15H0z" fill="#fff" /><path d="M5.500 5v5H11" stroke="#666" strokeWidth="2" /></Icon></TabStop>
        <RulerSlot><TopRuler /></RulerSlot>
      </RulerBar>
      <Workspace>
        <SideRuler><LeftRuler /></SideRuler>
        <PageSlot><Page><DocumentTable /></Page></PageSlot>
        <Activation>
          <ActivationTitle>Activate Windows</ActivationTitle>
          Go to Settings to activate Windows.
        </Activation>
      </Workspace>
      <StatusBar>
        <StatusText $w={76}>Page 1 of 1</StatusText>
        <StatusText $w={65}>57 words</StatusText>
        <StatusText>English (United States)</StatusText>
        <ViewButtons>
          <ViewButton aria-label="Read mode"><Icon w={14} h={13} stroke="#666"><path d="M7 2L5 .5H.5v10H5L7 12l2-1.500h4.500V.5H9zM7 2v10M2.500 3.500h2M2.500 5.500h2M2.500 7.500h2M9.500 3.500h2M9.500 5.500h2M9.500 7.500h2" /></Icon></ViewButton>
          <ViewButton $on aria-label="Print layout"><Icon w={14} h={13} stroke="#555"><path d="M.5.5h13v12H.5zM2 3.500h10M2 5.500h10M2 7.500h10M2 9.500h10" /></Icon></ViewButton>
          <ViewButton aria-label="Web layout"><Icon w={15} h={13} stroke="#666"><path d="M5 10.500H.5V.5h11V5M2.500 3.500h7M2.500 5.500h5M2.500 7.500h3" /><circle cx="10" cy="8.500" r="4" fill="#777" stroke="none" /><path d="M8 7l2 1-1 2M11 6l1 2" stroke="#ddd" /></Icon></ViewButton>
        </ViewButtons>
        <ZoomButton aria-label="Zoom out"><Icon w={9} h={9} stroke="#444"><path d="M0 4.500h8" /></Icon></ZoomButton>
        <ZoomSlider type="range" min="0" max="100" defaultValue="50" aria-label="Zoom" />
        <ZoomButton aria-label="Zoom in"><Icon w={9} h={9} stroke="#444"><path d="M0 4.500h8M4.500 0v9" /></Icon></ZoomButton>
        <ZoomValue>100%</ZoomValue>
      </StatusBar>
      <Taskbar />
      <SiteMark width="230" height="115" viewBox="0 0 230 115" role="img" aria-label="webxoso.net">
        <defs><linearGradient id="flame" x1="0" y1="0" x2="0" y2="1"><stop stopColor="#ffa050" /><stop offset="1" stopColor="#ff5a14" /></linearGradient></defs>
        <text transform="translate(13 105) rotate(-22)" fontFamily="DejaVu Serif, serif" fontWeight="700" fontSize="31" fill="url(#flame)" stroke="url(#flame)" strokeWidth="2" strokeLinejoin="round">webxoso.net</text>
      </SiteMark>
    </Shell>
  );
}
